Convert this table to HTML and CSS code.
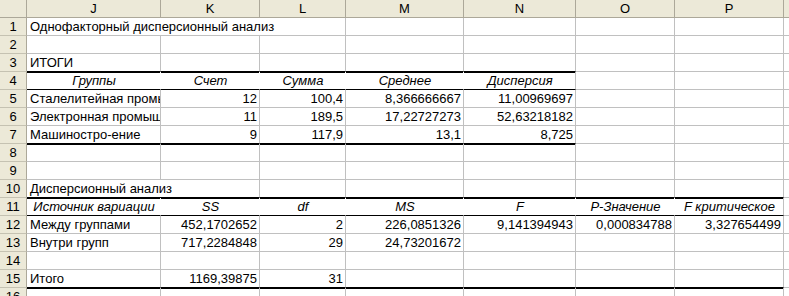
FILE: index.html
```html
<!DOCTYPE html>
<html lang="ru">
<head>
<meta charset="utf-8">
<title>Однофакторный дисперсионный анализ</title>
<link rel="stylesheet" href="styles.css">
</head>
<body>
<div class="sheet">
  <div class="hd corner"></div><div class="hd">J</div><div class="hd">K</div><div class="hd">L</div><div class="hd">M</div><div class="hd">N</div><div class="hd">O</div><div class="hd">P</div><div class="hd q"></div>

  <div class="rn">1</div><div class="cell span3">Однофакторный дисперсионный анализ</div><div class="cell"></div><div class="cell"></div><div class="cell"></div><div class="cell"></div><div class="cell q"></div>

  <div class="rn">2</div><div class="cell"></div><div class="cell"></div><div class="cell"></div><div class="cell"></div><div class="cell"></div><div class="cell"></div><div class="cell"></div><div class="cell q"></div>

  <div class="rn">3</div><div class="cell bb">ИТОГИ</div><div class="cell bb"></div><div class="cell bb"></div><div class="cell bb"></div><div class="cell bb"></div><div class="cell"></div><div class="cell"></div><div class="cell q"></div>

  <div class="rn">4</div><div class="cell ts bb nv hc">Группы</div><div class="cell ts bb nv hc">Счет</div><div class="cell ts bb nv hc">Сумма</div><div class="cell ts bb nv hc">Среднее</div><div class="cell ts bb hc">Дисперсия</div><div class="cell"></div><div class="cell"></div><div class="cell q"></div>

  <div class="rn">5</div><div class="cell clip">Сталелитейная промышленность</div><div class="cell num">12</div><div class="cell num">100,4</div><div class="cell num">8,366666667</div><div class="cell num">11,00969697</div><div class="cell"></div><div class="cell"></div><div class="cell q"></div>

  <div class="rn">6</div><div class="cell clip">Электронная промышленность</div><div class="cell num">11</div><div class="cell num">189,5</div><div class="cell num">17,22727273</div><div class="cell num">52,63218182</div><div class="cell"></div><div class="cell"></div><div class="cell q"></div>

  <div class="rn">7</div><div class="cell bb">Машиностро-ение</div><div class="cell bb num">9</div><div class="cell bb num">117,9</div><div class="cell bb num">13,1</div><div class="cell bb num">8,725</div><div class="cell"></div><div class="cell"></div><div class="cell q"></div>

  <div class="rn">8</div><div class="cell ts"></div><div class="cell ts"></div><div class="cell ts"></div><div class="cell ts"></div><div class="cell ts"></div><div class="cell"></div><div class="cell"></div><div class="cell q"></div>

  <div class="rn">9</div><div class="cell"></div><div class="cell"></div><div class="cell"></div><div class="cell"></div><div class="cell"></div><div class="cell"></div><div class="cell"></div><div class="cell q"></div>

  <div class="rn">10</div><div class="cell bb span2">Дисперсионный анализ</div><div class="cell bb"></div><div class="cell bb"></div><div class="cell bb"></div><div class="cell bb"></div><div class="cell bb"></div><div class="cell q"></div>

  <div class="rn">11</div><div class="cell ts bb nv hc">Источник вариации</div><div class="cell ts bb nv hc">SS</div><div class="cell ts bb nv hc">df</div><div class="cell ts bb nv hc">MS</div><div class="cell ts bb nv hc">F</div><div class="cell ts bb nv hc">P-Значение</div><div class="cell ts bb hc">F критическое</div><div class="cell q"></div>

  <div class="rn">12</div><div class="cell">Между группами</div><div class="cell num">452,1702652</div><div class="cell num">2</div><div class="cell num">226,0851326</div><div class="cell num">9,141394943</div><div class="cell num">0,000834788</div><div class="cell num">3,327654499</div><div class="cell q"></div>

  <div class="rn">13</div><div class="cell">Внутри групп</div><div class="cell num">717,2284848</div><div class="cell num">29</div><div class="cell num">24,73201672</div><div class="cell"></div><div class="cell"></div><div class="cell"></div><div class="cell q"></div>

  <div class="rn">14</div><div class="cell"></div><div class="cell"></div><div class="cell"></div><div class="cell"></div><div class="cell"></div><div class="cell"></div><div class="cell"></div><div class="cell q"></div>

  <div class="rn">15</div><div class="cell bb">Итого</div><div class="cell bb num">1169,39875</div><div class="cell bb num">31</div><div class="cell bb"></div><div class="cell bb"></div><div class="cell bb"></div><div class="cell bb"></div><div class="cell q"></div>

  <div class="rn">16</div><div class="cell ts"></div><div class="cell ts"></div><div class="cell ts"></div><div class="cell ts"></div><div class="cell ts"></div><div class="cell ts"></div><div class="cell ts"></div><div class="cell q"></div>
</div>
</body>
</html>
```

FILE: styles.css
```css
html, body {
  margin: 0;
  padding: 0;
  background: #ffffff;
  overflow: hidden;
}

.sheet {
  display: grid;
  grid-template-columns: 27px 134px 99px 86px 118px 112px 99px 109px 5px;
  grid-auto-rows: 18px;
  width: 789px;
  font-family: "Liberation Sans", Arial, sans-serif;
  font-size: 13px;
  line-height: 17px;
  color: #000000;
}

.sheet > div {
  box-sizing: border-box;
  white-space: nowrap;
}

.hd,
.rn {
  background: #ece9d8;
  border-right: 1px solid #aca899;
  border-bottom: 1px solid #aca899;
  text-align: center;
}

.rn {
  border-bottom-color: #c5c2b2;
}

.hd.q {
  border-right: none;
}

.cell {
  border-right: 1px solid #c0c0c0;
  border-bottom: 1px solid #c0c0c0;
  padding: 0 2px 0 3px;
}

.cell.q {
  border-right: none;
  padding: 0;
}

.span3 {
  grid-column: span 3;
}

.span2 {
  grid-column: span 2;
}

.num {
  text-align: right;
}

.hc {
  text-align: center;
  font-style: italic;
}

.clip {
  overflow: hidden;
  text-overflow: clip;
}

.bb {
  border-bottom-color: #000000;
}

.ts {
  box-shadow: inset 0 1px 0 #000000;
}

.nv {
  border-right-color: #ffffff;
}
```
